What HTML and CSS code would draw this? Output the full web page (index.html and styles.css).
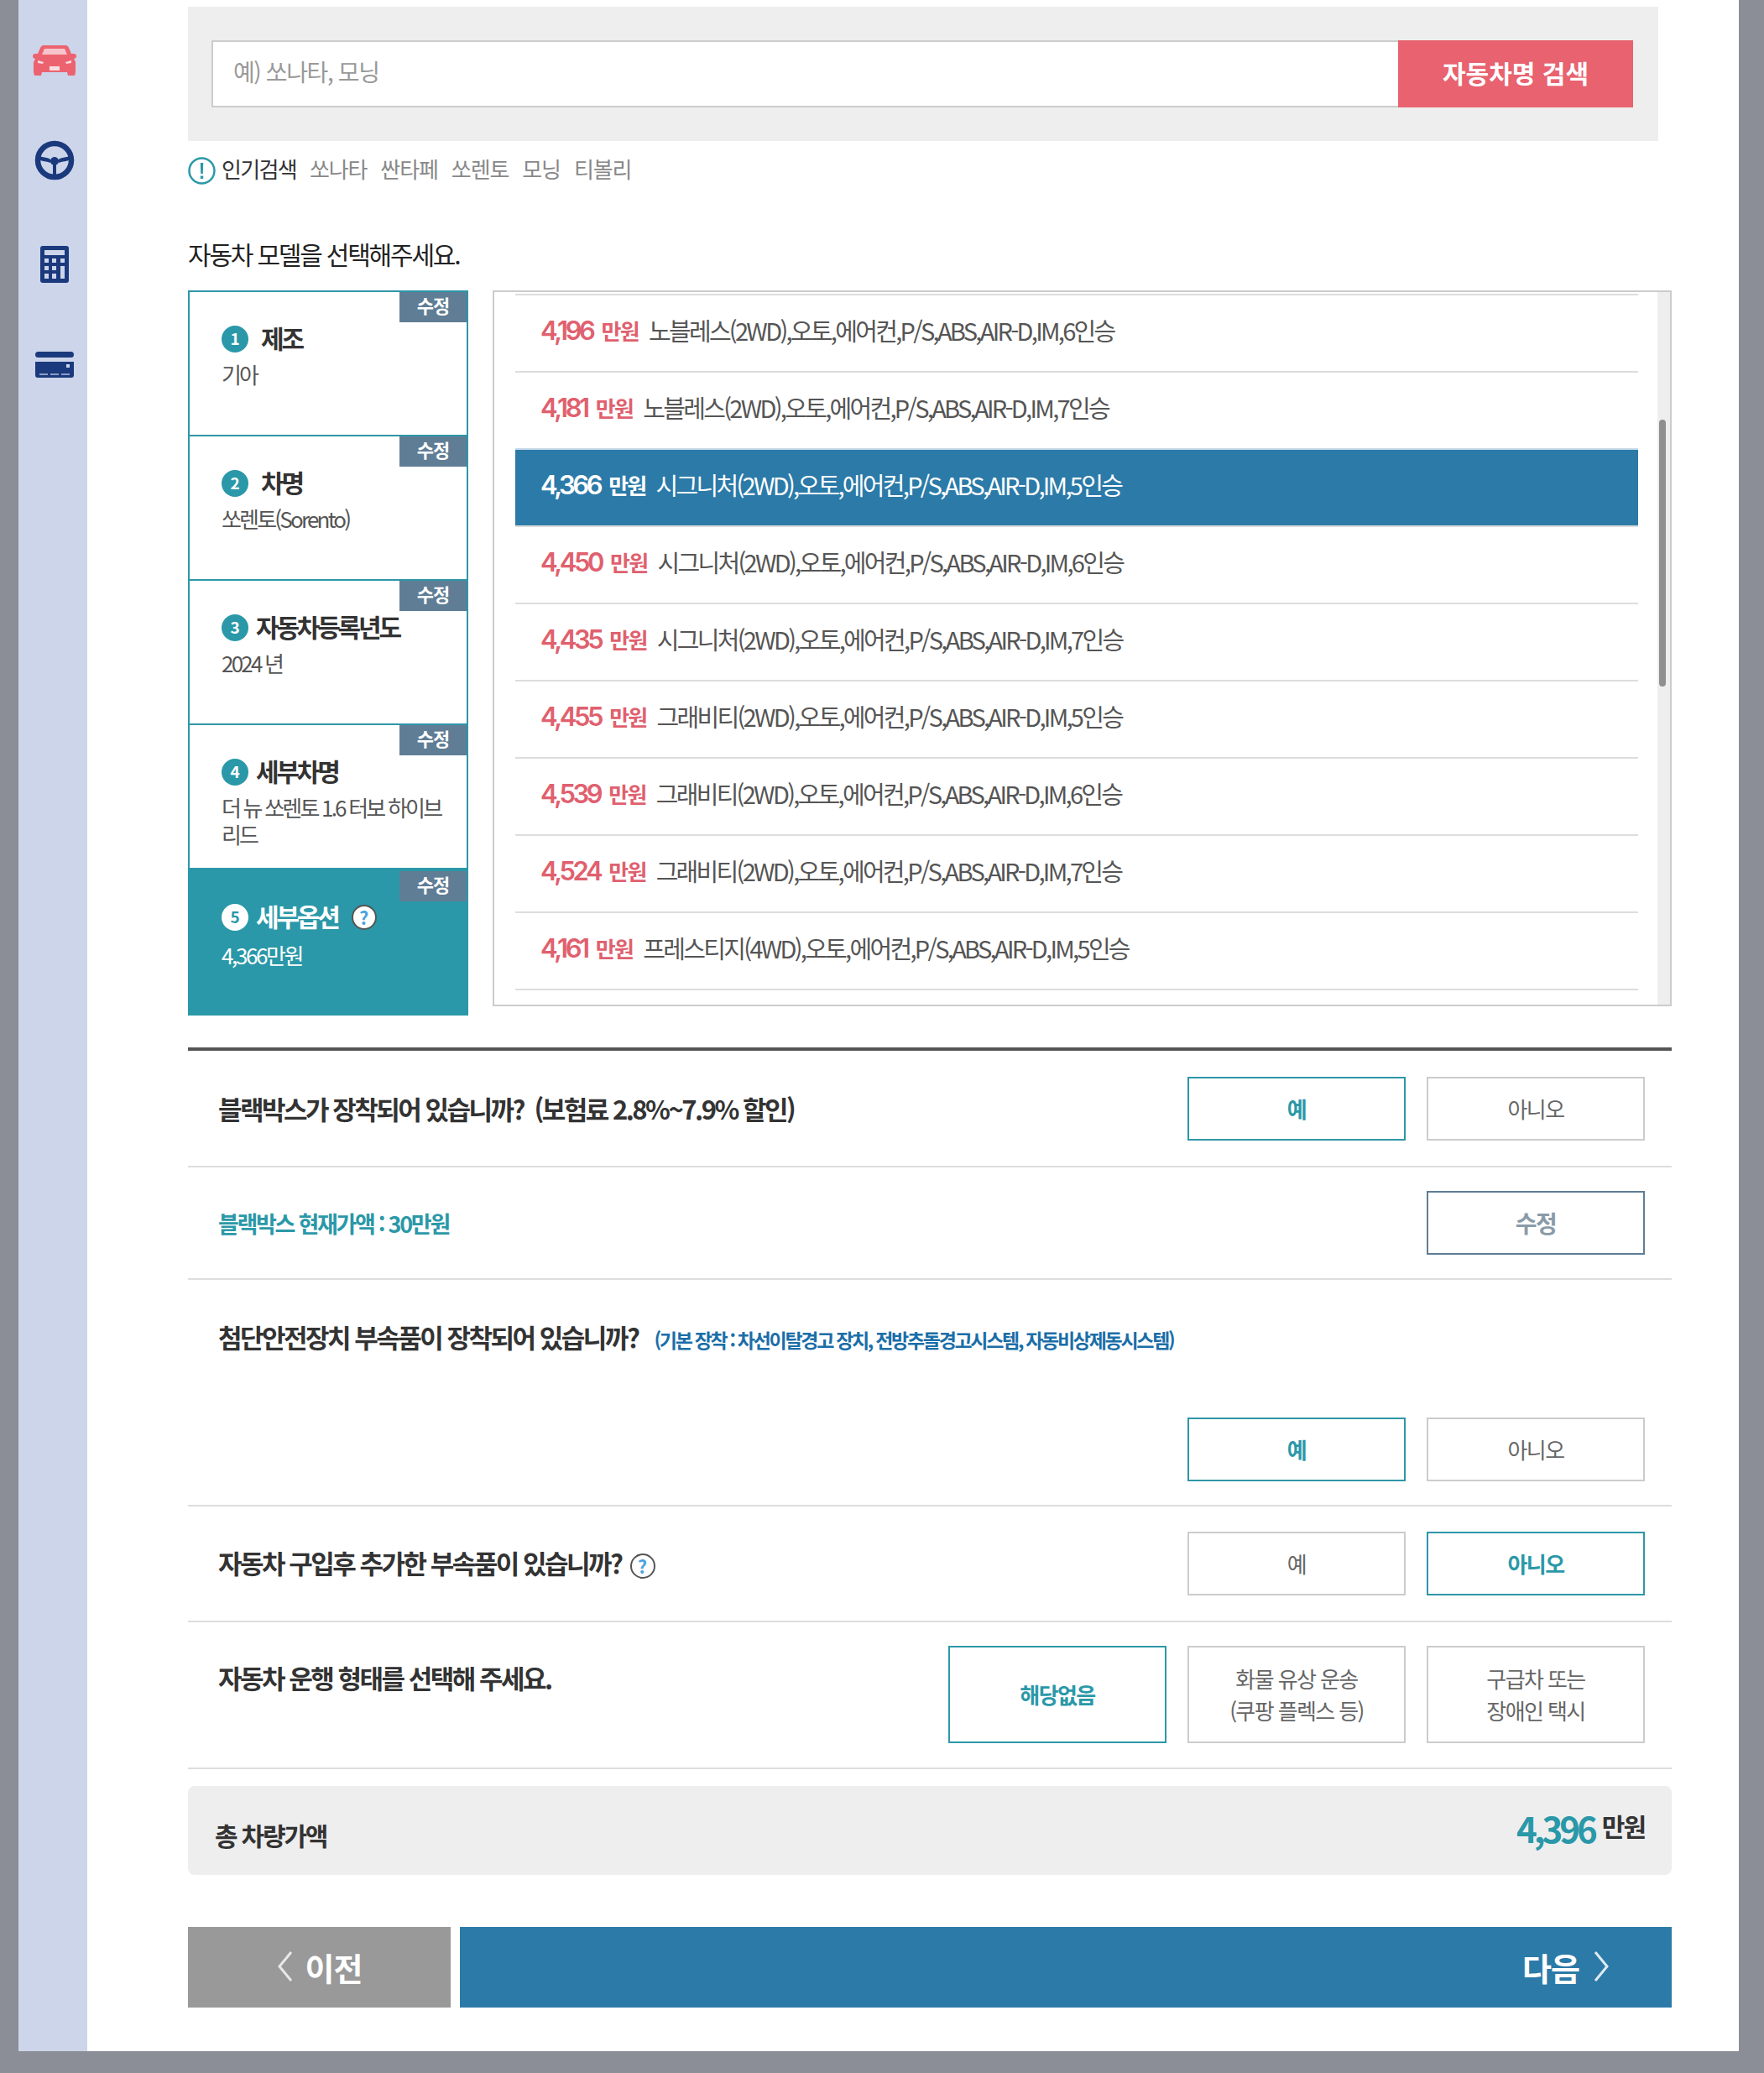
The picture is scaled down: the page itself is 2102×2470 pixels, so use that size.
FILE: index.html
```html
<!DOCTYPE html>
<html lang="ko">
<head>
<meta charset="utf-8">
<title>자동차 모델 선택</title>
<link rel="stylesheet" href="styles.css">
</head>
<body>
<div class="page">
  <nav class="side">
    <svg class="ico ico-car" viewBox="0 0 52 37"><path fill="#ec636f" d="M13 1h26c2 0 3 1 4 3l3 7h3c2 0 3 1 3 3s-1 2-3 3l2 4v12l-1 4h-8l-1-4H11l-1 4H2l-1-4V21l2-4c-2-1-3-1-3-3s1-3 3-3h3l3-7c1-2 2-3 4-3z"/><path fill="#f5c5cb" d="M14 5h24l3 7H11z"/><path fill="#f9dde0" d="M6 19l7 2-1 2-6-1zM46 19l-7 2 1 2 6-1zM20 26h12v5H20z"/></svg>
    <svg class="ico ico-wheel" viewBox="0 0 48 48"><circle cx="24" cy="24" r="20" fill="none" stroke="#1b3a7d" stroke-width="6.500"/><path fill="#1b3a7d" d="M5 19c3 1 14 2 15 5l-1 3c-3-1-12-3-14-3zM43 19c-3 1-14 2-15 5l1 3c3-1 12-3 14-3zM22 28h4v15h-4z"/><circle cx="24" cy="25" r="5" fill="#1b3a7d"/></svg>
    <svg class="ico ico-calc" viewBox="0 0 34 44"><rect width="34" height="44" rx="3" fill="#1b3a7d"/><rect x="5" y="5" width="24" height="6" fill="#cdd5ea"/><g fill="#cdd5ea"><rect x="5" y="15" width="5" height="5"/><rect x="14" y="15" width="5" height="5"/><rect x="24" y="15" width="5" height="5"/><rect x="5" y="24" width="5" height="5"/><rect x="14" y="24" width="5" height="5"/><rect x="24" y="24" width="5" height="15"/><rect x="5" y="33" width="5" height="6"/><rect x="14" y="33" width="5" height="6"/></g></svg>
    <svg class="ico ico-card" viewBox="0 0 46 31"><rect width="46" height="7" rx="3.500" fill="#1b3a7d"/><path fill="#1b3a7d" d="M0 12h46v16c0 2-1 3-3 3H3c-2 0-3-1-3-3z"/><path fill="#8d9cc6" d="M5 26h10v2H5zM18 26h10v2H18zM31 26h10v2H31z"/><path fill="#cdd5ea" d="M37 15h4v4h-4z"/></svg>
  </nav>

  <main class="main">
    <section class="search">
      <div class="search-input">예) 쏘나타, 모닝</div>
      <button class="search-btn">자동차명 검색</button>
    </section>

    <div class="hints">
      <svg class="hint-ico" viewBox="0 0 33 33"><circle cx="16.500" cy="16.500" r="15" fill="#fff" stroke="#2a98a8" stroke-width="2.500"/><path fill="#2a98a8" d="M14.800 7h3.400l-.4 13h-2.600zM14.800 22.500h3.400v3.500h-3.400z"/></svg>
      <strong class="hint-label">인기검색</strong>
      <span class="hint">쏘나타</span><span class="hint">싼타페</span><span class="hint">쏘렌토</span><span class="hint">모닝</span><span class="hint">티볼리</span>
    </div>

    <h2 class="title">자동차 모델을 선택해주세요.</h2>

    <section class="picker">
      <div class="steps">
        <div class="step">
          <span class="badge">수정</span>
          <div class="step-head"><span class="num">1</span><span class="step-name gap">제조</span></div>
          <p class="step-sub">기아</p>
        </div>
        <div class="step">
          <span class="badge">수정</span>
          <div class="step-head"><span class="num">2</span><span class="step-name gap">차명</span></div>
          <p class="step-sub">쏘렌토(Sorento)</p>
        </div>
        <div class="step">
          <span class="badge">수정</span>
          <div class="step-head"><span class="num">3</span><span class="step-name">자동차등록년도</span></div>
          <p class="step-sub">2024 년</p>
        </div>
        <div class="step">
          <span class="badge">수정</span>
          <div class="step-head"><span class="num">4</span><span class="step-name">세부차명</span></div>
          <p class="step-sub">더 뉴 쏘렌토 1.6 터보 하이브리드</p>
        </div>
        <div class="step step-active">
          <span class="badge">수정</span>
          <div class="step-head"><span class="num">5</span><span class="step-name">세부옵션</span><span class="help help-step">?</span></div>
          <p class="step-sub">4,366만원</p>
        </div>
      </div>

      <div class="list">
        <div class="row"><b class="price">4,196</b><b class="unit">만원</b><span class="spec">노블레스(2WD),오토,에어컨,P/S,ABS,AIR-D,IM,6인승</span></div>
        <div class="row"><b class="price">4,181</b><b class="unit">만원</b><span class="spec">노블레스(2WD),오토,에어컨,P/S,ABS,AIR-D,IM,7인승</span></div>
        <div class="row row-on"><b class="price">4,366</b><b class="unit">만원</b><span class="spec">시그니처(2WD),오토,에어컨,P/S,ABS,AIR-D,IM,5인승</span></div>
        <div class="row"><b class="price">4,450</b><b class="unit">만원</b><span class="spec">시그니처(2WD),오토,에어컨,P/S,ABS,AIR-D,IM,6인승</span></div>
        <div class="row"><b class="price">4,435</b><b class="unit">만원</b><span class="spec">시그니처(2WD),오토,에어컨,P/S,ABS,AIR-D,IM,7인승</span></div>
        <div class="row"><b class="price">4,455</b><b class="unit">만원</b><span class="spec">그래비티(2WD),오토,에어컨,P/S,ABS,AIR-D,IM,5인승</span></div>
        <div class="row"><b class="price">4,539</b><b class="unit">만원</b><span class="spec">그래비티(2WD),오토,에어컨,P/S,ABS,AIR-D,IM,6인승</span></div>
        <div class="row"><b class="price">4,524</b><b class="unit">만원</b><span class="spec">그래비티(2WD),오토,에어컨,P/S,ABS,AIR-D,IM,7인승</span></div>
        <div class="row"><b class="price">4,161</b><b class="unit">만원</b><span class="spec">프레스티지(4WD),오토,에어컨,P/S,ABS,AIR-D,IM,5인승</span></div>
        <div class="track"><div class="thumb"></div></div>
      </div>
    </section>

    <section class="form">
      <div class="q q1">
        <div class="q-text">블랙박스가 장착되어 있습니까? &nbsp;(보험료 2.8%~7.9% 할인)</div>
        <div class="opts"><button class="opt on">예</button><button class="opt">아니오</button></div>
      </div>
      <div class="q q2">
        <div class="q-value">블랙박스 현재가액 : 30만원</div>
        <div class="opts"><button class="opt edit">수정</button></div>
      </div>
      <div class="q q3">
        <div class="q-line"><span class="q-text">첨단안전장치 부속품이 장착되어 있습니까?</span><span class="q-note">(기본 장착 : 차선이탈경고 장치, 전방추돌경고시스템, 자동비상제동시스템)</span></div>
        <div class="opts"><button class="opt on">예</button><button class="opt">아니오</button></div>
      </div>
      <div class="q q4">
        <div class="q-line"><span class="q-text">자동차 구입후 추가한 부속품이 있습니까?</span><span class="help help-q4">?</span></div>
        <div class="opts"><button class="opt">예</button><button class="opt on">아니오</button></div>
      </div>
      <div class="q q5">
        <div class="q-text">자동차 운행 형태를 선택해 주세요.</div>
        <div class="opts"><button class="opt tall on">해당없음</button><button class="opt tall">화물 유상 운송<br>(쿠팡 플렉스 등)</button><button class="opt tall">구급차 또는<br>장애인 택시</button></div>
      </div>
    </section>

    <section class="total">
      <span class="total-label">총 차량가액</span>
      <span class="total-value"><b class="total-num">4,396</b><b class="total-unit">만원</b></span>
    </section>

    <section class="nav">
      <button class="nav-btn prev"><svg class="chev" viewBox="0 0 20 38"><path d="M17 2 3 19l14 17" fill="none" stroke="#e8e8e8" stroke-width="3"/></svg>이전</button>
      <button class="nav-btn next">다음<svg class="chev" viewBox="0 0 20 38"><path d="m3 2 14 17L3 36" fill="none" stroke="#dfeaf2" stroke-width="3"/></svg></button>
    </section>
  </main>
</div>
</body>
</html>
```

FILE: styles.css
```css
* { box-sizing: border-box; }
html, body { margin: 0; padding: 0; }
body {
  background: #8b8e97;
  font-family: "Noto Sans CJK KR", "Noto Sans", sans-serif;
  color: #333;
  height: 2470px;
}
button { font-family: inherit; padding: 0; cursor: pointer; }
p, h2 { margin: 0; }

.page { display: flex; height: 2444px; padding-left: 22px; width: 2072px; }

.side {
  width: 82px;
  background: #cdd5ea;
  display: flex;
  flex-direction: column;
  align-items: center;
  flex: none;
  padding-left: 3px;
}
.ico { display: block; flex: none; }
.ico-car { width: 52px; height: 37px; margin-top: 53px; }
.ico-wheel { width: 48px; height: 48px; margin-top: 77px; }
.ico-calc { width: 34px; height: 44px; margin-top: 78px; }
.ico-card { width: 46px; height: 31px; margin-top: 82px; }

.main {
  flex: 1;
  background: #fff;
  padding: 8px 80px 0 120px;
  min-width: 0;
}

.search {
  width: 1752px;
  height: 160px;
  background: #eee;
  padding: 40px 30px 40px 28px;
  display: flex;
}
.search-input {
  flex: 1;
  height: 80px;
  background: #fff;
  border: 2px solid #ccc;
  border-right: 0;
  padding-left: 24px;
  font-size: 28px;
  letter-spacing: -1.400px;
  line-height: 70px;
  color: #999;
}
.search-btn {
  width: 280px;
  height: 80px;
  border: 0;
  background: #e8626f;
  color: #fff;
  font-size: 30px;
  font-weight: 700;
  letter-spacing: 0;
  padding-bottom: 5px;
}

.hints { display: flex; align-items: center; height: 33px; margin-top: 19px; }
.hint-ico { width: 33px; height: 33px; flex: none; margin-right: 7px; }
.hint-label { font-weight: 400; font-size: 26px; letter-spacing: -1.700px; color: #333; margin-right: 16px; margin-top: -6px; }
.hint { font-size: 26px; letter-spacing: -1.100px; color: #888; margin-right: 16px; margin-top: -6px; }

.title {
  font-size: 30px;
  font-weight: 400;
  letter-spacing: -2.200px;
  color: #222;
  line-height: 40px;
  margin-top: 62px;
}

.picker { display: flex; gap: 29px; margin-top: 24px; height: 864px; align-items: flex-start; }

.steps { width: 334px; flex: none; }
.step {
  position: relative;
  height: 172px;
  border: solid #2e97a7;
  border-width: 2px 2px 0;
  padding: 34px 16px 0 38px;
  background: #fff;
}
.badge {
  position: absolute;
  top: 0;
  right: 0;
  width: 80px;
  height: 36px;
  background: #5f7d95;
  color: #fff;
  font-size: 22px;
  font-weight: 700;
  line-height: 30px;
  text-align: center;
  letter-spacing: -1px;
}
.step-head { display: flex; align-items: center; height: 40px; }
.num {
  width: 32px;
  height: 32px;
  border-radius: 50%;
  background: #2a98a8;
  color: #fff;
  font-size: 19px;
  line-height: 30px;
  text-align: center;
  font-weight: 700;
  margin: 4px 9px 0 0;
  flex: none;
}
.step-name {
  font-size: 30px;
  font-weight: 700;
  letter-spacing: -3.200px;
  color: #333;
  white-space: nowrap;
}
.step-name.gap { margin-left: 6px; }
.step-sub {
  margin-top: 8px;
  font-size: 26px;
  line-height: 32px;
  letter-spacing: -2.800px;
  color: #555;
}
.step-active {
  height: 176px;
  background: #2a98a8;
  border: 0;
  padding: 37px 18px 0 40px;
}
.step-active .badge { top: 4px; right: 2px; }
.step-active .num { background: #fff; color: #2a98a8; }
.step-active .step-name, .step-active .step-sub { color: #fff; }
.step-active .step-sub { margin-top: 11px; letter-spacing: -2.400px; }

.help {
  flex: none;
  display: block;
  width: 30px;
  height: 30px;
  border-radius: 50%;
  background: #fff;
  border: 2px solid #555;
  color: #4aa3e0;
  font-size: 22px;
  font-weight: 700;
  line-height: 25px;
  text-align: center;
}
.help-step { margin: 4px 0 0 16px; }
.help-q4 { margin: 6px 0 0 10px; }

.list {
  position: relative;
  width: 1405px;
  height: 853px;
  flex: none;
  border: 2px solid #ccc;
  padding: 2px 0 0 25px;
  overflow: hidden;
}
.row {
  width: 1338px;
  height: 92px;
  border-top: 2px solid #ddd;
  display: flex;
  align-items: center;
  padding: 0 0 8px 30px;
  white-space: nowrap;
}
.row:nth-child(9) { height: 94px; border-bottom: 2px solid #ddd; }
.price { font-family: Inter, "Noto Sans CJK KR", sans-serif; font-size: 31px; font-weight: 600; letter-spacing: -3.400px; color: #e0606e; margin-right: 10px; }
.unit { font-size: 26px; font-weight: 700; letter-spacing: -1.700px; color: #e0606e; margin-right: 12px; }
.spec { font-size: 29px; letter-spacing: -2.700px; color: #555; }
.row-on { background: #2c7aa8; border-top-color: #c8dbe8; }
.row-on .price, .row-on .unit, .row-on .spec { color: #fff; }

.track { position: absolute; top: 0; right: 0; width: 15px; bottom: 0; background: #eee; }
.thumb { position: absolute; top: 152px; left: 2px; width: 8px; height: 318px; border-radius: 4px; background: #8f8f8f; }

.form { border-top: 4px solid #555; margin-top: 38px; }
.q { display: flex; justify-content: space-between; border-bottom: 2px solid #ddd; padding: 0 32px 0 36px; }
.q1 { height: 139px; align-items: center; }
.q2 { height: 134px; align-items: center; }
.q3 { height: 270px; display: block; padding-top: 44px; }
.q3 .q-line { height: 46px; }
.q3 .opts { justify-content: flex-end; margin-top: 74px; }
.q4 { height: 138px; align-items: center; }
.q4 .q-text { margin-top: -4px; }
.q5 { height: 175px; padding-top: 28px; }
.q5 .q-text { margin-top: 15px; }

.q-text { font-size: 31px; font-weight: 700; letter-spacing: -2.500px; color: #333; white-space: nowrap; }
.q-line { display: flex; align-items: center; }
.q-note { font-size: 23px; font-weight: 700; letter-spacing: -2.300px; color: #1a6ea8; margin: 8px 0 0 19px; white-space: nowrap; }
.q-value { font-size: 27px; font-weight: 700; letter-spacing: -2.300px; color: #2a98a8; }

.opts { display: flex; gap: 25px; }
.opt {
  width: 260px;
  height: 76px;
  background: #fff;
  border: 2px solid #ccc;
  color: #666;
  font-size: 26px;
  letter-spacing: -1.600px;
  line-height: 38px;
}
.opt.on { border-color: #2e97a7; color: #2a98a8; font-weight: 700; }
.opt.edit { border-color: #5f7d95; color: #8a9ba8; font-weight: 700; font-size: 28px; }
.opt.tall { height: 116px; }

.total {
  height: 106px;
  margin-top: 20px;
  background: #eee;
  border-radius: 8px;
  display: flex;
  justify-content: space-between;
  padding: 0 32px;
}
.total-label { font-size: 30px; font-weight: 700; letter-spacing: -2.200px; color: #333; align-self: center; margin-top: 9px; }
.total-value { align-self: center; margin-top: -8px; display: flex; align-items: center; white-space: nowrap; }
.total-num { font-size: 42px; font-weight: 700; letter-spacing: -4px; color: #2a98a8; }
.total-unit { font-size: 30px; font-weight: 700; letter-spacing: -2px; color: #333; margin-left: 9px; padding-bottom: 4px; }

.nav { display: flex; gap: 11px; margin-top: 62px; }
.nav-btn {
  height: 96px;
  border: 0;
  color: #fff;
  font-size: 38px;
  font-weight: 700;
  display: flex;
  align-items: center;
  letter-spacing: -1px;
  padding-bottom: 2px;
}
.chev { width: 20px; height: 38px; flex: none; }
.prev { width: 313px; background: #999; justify-content: center; gap: 14px; }
.next { flex: 1; background: #2c7aa8; justify-content: flex-end; padding-right: 74px; gap: 16px; }
```
